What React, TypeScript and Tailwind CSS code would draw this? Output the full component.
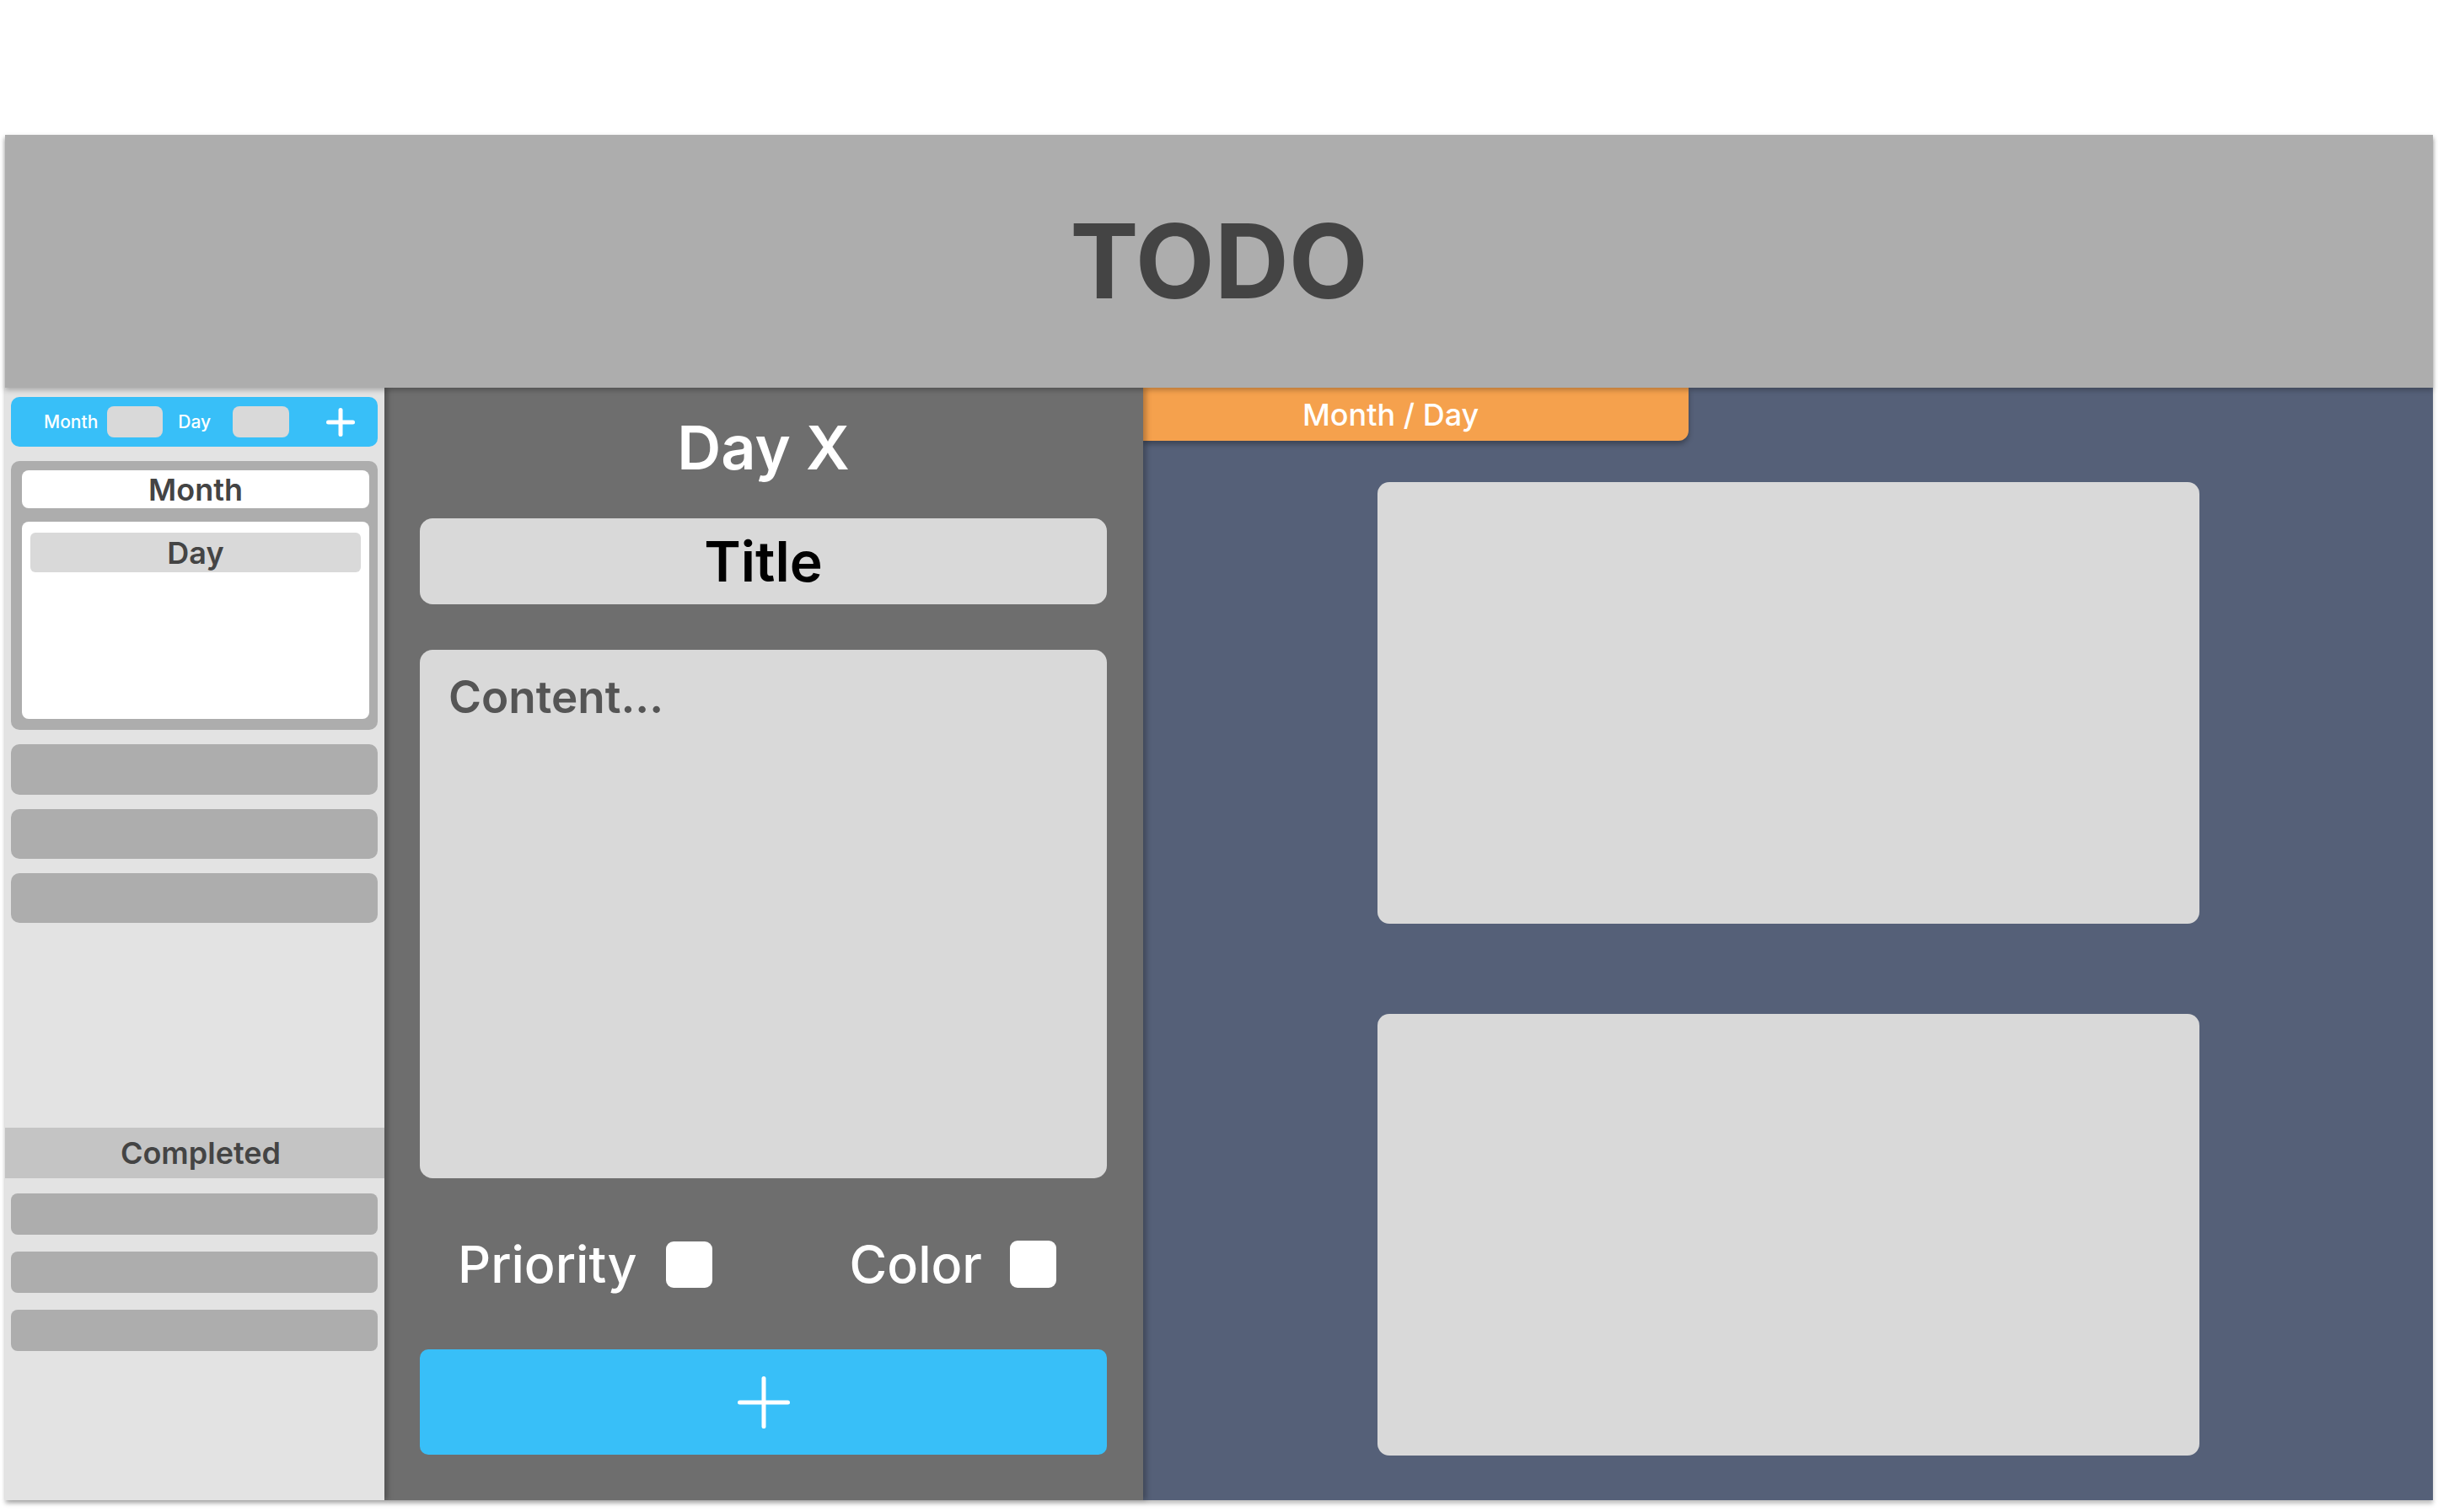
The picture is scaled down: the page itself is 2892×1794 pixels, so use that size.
import React from "react";

function Plus({ size, stroke }: { size: number; stroke: number }) {
  const h = stroke / 2;
  return (
    <svg width={size} height={size} viewBox={`0 0 ${size} ${size}`} fill="none">
      <line x1={size / 2} y1={h} x2={size / 2} y2={size - h} stroke="white" strokeWidth={stroke} strokeLinecap="round" />
      <line x1={h} y1={size / 2} x2={size - h} y2={size / 2} stroke="white" strokeWidth={stroke} strokeLinecap="round" />
    </svg>
  );
}

function Sidebar() {
  return (
    <div className="relative z-[3] flex w-[450px] flex-col bg-[#e3e3e3] shadow-[4px_0_6px_rgba(0,0,0,0.25)]">
      <div className="flex flex-col pl-[7px] pr-[8px] pt-[11px]">
        <div className="flex h-[59px] items-center rounded-[10px] bg-[#38bff8] pl-[39px]">
          <span className="text-[21px] font-medium leading-none text-white">Month</span>
          <div className="ml-[11px] h-[37px] w-[66px] rounded-[8px] bg-[#d9d9d9]" />
          <span className="ml-[18px] text-[21px] font-medium leading-none text-white">Day</span>
          <div className="ml-[26px] h-[37px] w-[67px] rounded-[8px] bg-[#d9d9d9]" />
          <div className="ml-[44px] flex items-center">
            <Plus size={34} stroke={5} />
          </div>
        </div>

        <div className="mt-[17px] flex h-[319px] flex-col rounded-[10px] bg-[#adadad] pb-[13px] pl-[13px] pr-[10px] pt-[11px]">
          <div className="flex h-[45px] items-center justify-center rounded-[8px] bg-white">
            <span className="text-[36px] font-semibold leading-none text-[#444444]">Month</span>
          </div>
          <div className="mt-[16px] flex flex-1 flex-col rounded-[8px] bg-white px-[10px] pt-[13px]">
            <div className="flex h-[47px] items-center justify-center rounded-[6px] bg-[#d9d9d9]">
              <span className="text-[36px] font-semibold leading-none text-[#444444]">Day</span>
            </div>
          </div>
        </div>

        <div className="mt-[17px] flex flex-col gap-[17px]">
          <div className="h-[60px] rounded-[10px] bg-[#adadad]" />
          <div className="h-[59px] rounded-[10px] bg-[#adadad]" />
          <div className="h-[59px] rounded-[10px] bg-[#adadad]" />
        </div>
      </div>

      <div className="flex-1" />

      <div className="flex h-[60px] items-center justify-center bg-[#c4c4c4] pl-[14px]">
        <span className="text-[36px] font-semibold leading-none text-[#444444]">Completed</span>
      </div>

      <div className="flex h-[382px] flex-col gap-[20px] pl-[7px] pr-[8px] pt-[18px]">
        <div className="h-[49px] rounded-[8px] bg-[#adadad]" />
        <div className="h-[49px] rounded-[8px] bg-[#adadad]" />
        <div className="h-[49px] rounded-[8px] bg-[#adadad]" />
      </div>
    </div>
  );
}

function Editor() {
  return (
    <div className="relative z-[2] flex w-[900px] flex-col bg-[#6e6e6e] pl-[42px] pr-[43px] pt-[35px] shadow-[4px_0_6px_rgba(0,0,0,0.25)]">
      <div className="flex h-[72px] items-center justify-center">
        <span className="text-[72px] font-semibold leading-none text-white">Day X</span>
      </div>
      <div className="mt-[48px] flex h-[102px] items-center justify-center rounded-[15px] bg-[#d9d9d9]">
        <span className="text-[66px] font-semibold leading-none text-black">Title</span>
      </div>
      <div className="mt-[54px] h-[627px] rounded-[15px] bg-[#d9d9d9] pl-[34px] pt-[30px]">
        <span className="text-[53px] font-semibold leading-none text-[#555555]">Content...</span>
      </div>
      <div className="mt-[74px] flex h-[56px] items-center pl-[45px]">
        <span className="text-[61px] font-medium leading-none text-white">Priority</span>
        <div className="ml-[34px] h-[55px] w-[55px] rounded-[9px] bg-white" />
        <span className="ml-[163px] text-[61px] font-medium leading-none text-white">Color</span>
        <div className="ml-[33px] h-[56px] w-[55px] rounded-[9px] bg-white" />
      </div>
      <div className="mt-[73px] flex h-[125px] items-center justify-center rounded-[10px] bg-[#38bff8]">
        <Plus size={62} stroke={5} />
      </div>
    </div>
  );
}

function Board() {
  return (
    <div className="relative z-[1] flex flex-1 flex-col bg-[#556078]">
      <div className="flex h-[63px] w-[647px] items-center rounded-br-[12px] bg-[#f5a14d] pl-[189px] shadow-[0_4px_6px_rgba(0,0,0,0.3)]">
        <span className="text-[36px] font-medium leading-none text-white">Month / Day</span>
      </div>
      <div className="mt-[49px] flex flex-col items-center gap-[107px]">
        <div className="h-[524px] w-[975px] rounded-[14px] bg-[#d9d9d9]" />
        <div className="h-[524px] w-[975px] rounded-[14px] bg-[#d9d9d9]" />
      </div>
    </div>
  );
}

export default function App() {
  return (
    <div
      className="h-[1794px] w-[2892px] overflow-hidden bg-white px-[6px] pt-[160px]"
      style={{ fontFamily: "Inter, 'Noto Sans', sans-serif" }}
    >
      <div className="flex h-[1620px] flex-col shadow-[0_4px_5px_rgba(0,0,0,0.25)]">
        <div className="relative z-10 flex h-[300px] items-center justify-center bg-[#adadad] shadow-[0_3px_6px_rgba(0,0,0,0.25)]">
          <span className="text-[122px] font-bold leading-none text-[#444444]">TODO</span>
        </div>
        <div className="flex h-[1320px]">
          <Sidebar />
          <Editor />
          <Board />
        </div>
      </div>
    </div>
  );
}
